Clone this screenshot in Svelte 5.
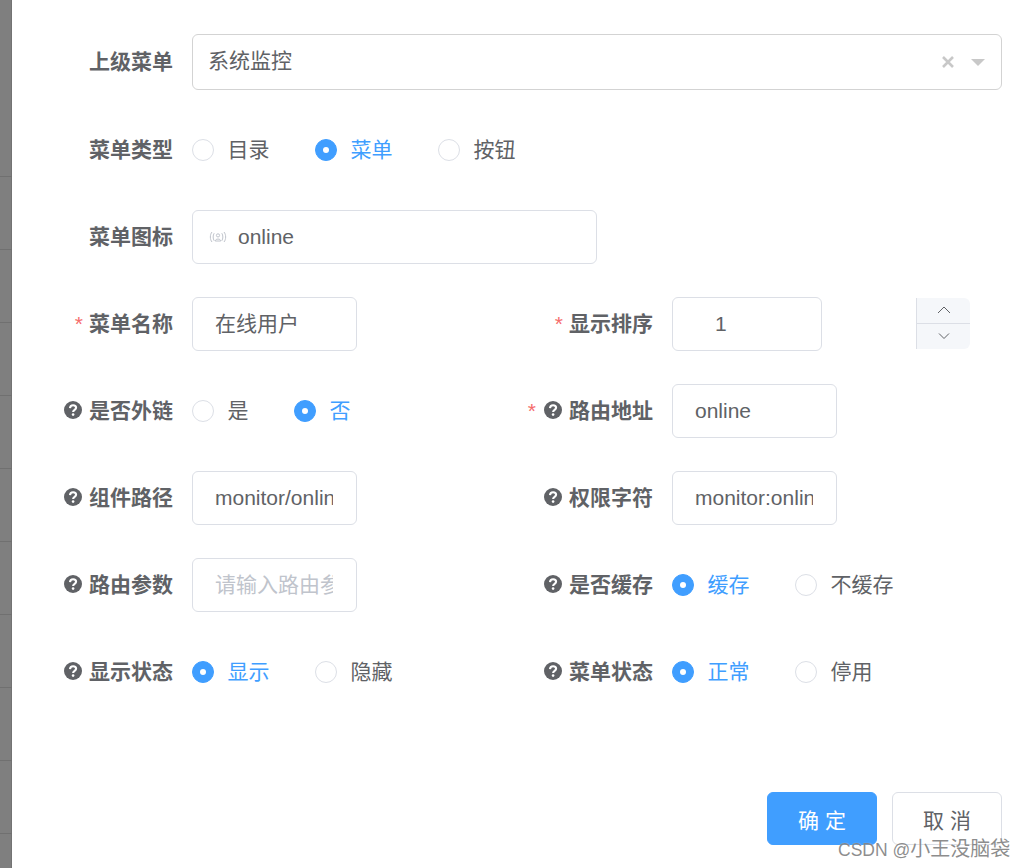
<script>
  const strip = Array(10).fill(0);

  let menuType = $state("菜单");
  let isFrame = $state("否");
  let isCache = $state("缓存");
  let visible = $state("显示");
  let menuStatus = $state("正常");
</script>

{#snippet fieldLabel(text, required, tip)}
  <div class="label">
    {#if required}<span class="star">*</span>{/if}
    {#if tip}
      <svg class="tip" viewBox="0 0 18 18" width="18" height="18">
        <circle cx="9" cy="9" r="9" fill="#606266" />
        <path d="M6 7.1C6.1 5.2 7.4 4.2 9.1 4.2C10.9 4.2 12.1 5.3 12.1 6.8C12.1 8.9 9.1 8.9 9.1 11.1" fill="none" stroke="#fff" stroke-width="2.1" />
        <circle cx="9.1" cy="13.6" r="1.3" fill="#fff" />
      </svg>
    {/if}
    <span>{text}</span>
  </div>
{/snippet}

{#snippet radios(options, current, pick)}
  <div class="radio-group">
    {#each options as opt}
      <button type="button" class="radio" class:checked={current === opt} onclick={() => pick(opt)}>
        <span class="dot"></span>
        <span>{opt}</span>
      </button>
    {/each}
  </div>
{/snippet}

<div class="page">
  <div class="backdrop">
    {#each strip as _}
      <div class="backdrop-row"></div>
    {/each}
  </div>

  <div class="dialog">
    <form class="form">
      <div class="item full select-row">
        {@render fieldLabel("上级菜单")}
        <div class="select">
          <span class="select-value">系统监控</span>
          <svg class="clear" viewBox="0 0 14 14" width="14" height="14">
            <path d="M2 2L12 12M12 2L2 12" stroke="#c8c8c8" stroke-width="2.6" fill="none" />
          </svg>
          <span class="caret"></span>
        </div>
      </div>

      <div class="item full">
        {@render fieldLabel("菜单类型")}
        {@render radios(["目录", "菜单", "按钮"], menuType, (v) => (menuType = v))}
      </div>

      <div class="item full">
        {@render fieldLabel("菜单图标")}
        <div class="icon-input">
          <svg viewBox="0 0 18 12" width="18" height="12" fill="none" stroke="#c0c4cc" stroke-width="1">
            <path d="M3 1C0.8 3.6 0.8 8.4 3 11M5.2 2.2C3.8 4.2 3.8 7.8 5.2 9.8M15 1C17.2 3.6 17.2 8.4 15 11M12.8 2.2C14.2 4.2 14.2 7.8 12.8 9.8" />
            <circle cx="9" cy="4.4" r="1.6" />
            <path d="M6.2 10C6.4 7.4 11.6 7.4 11.8 10Z" />
          </svg>
          <span>online</span>
        </div>
      </div>

      <div class="item">
        {@render fieldLabel("菜单名称", true)}
        <input class="input short cjk" value="在线用户" />
      </div>
      <div class="item">
        {@render fieldLabel("显示排序", true)}
        <input class="input number" value="1" />
        <div class="stepper">
          <div class="step">
            <svg viewBox="0 0 14 8" width="14" height="8"><path d="M1 7L7 1L13 7" fill="none" stroke="#606266" stroke-width="1" /></svg>
          </div>
          <div class="step">
            <svg viewBox="0 0 14 8" width="14" height="8"><path d="M2 1.5L7 6.5L12 1.5" fill="none" stroke="#606266" stroke-width="1" /></svg>
          </div>
        </div>
      </div>

      <div class="item">
        {@render fieldLabel("是否外链", false, true)}
        {@render radios(["是", "否"], isFrame, (v) => (isFrame = v))}
      </div>
      <div class="item">
        {@render fieldLabel("路由地址", true, true)}
        <input class="input short" value="online" />
      </div>

      <div class="item">
        {@render fieldLabel("组件路径", false, true)}
        <input class="input short" value="monitor/online/index" />
      </div>
      <div class="item">
        {@render fieldLabel("权限字符", false, true)}
        <input class="input short" value="monitor:online:list" />
      </div>

      <div class="item">
        {@render fieldLabel("路由参数", false, true)}
        <input class="input short" placeholder="请输入路由参数" />
      </div>
      <div class="item">
        {@render fieldLabel("是否缓存", false, true)}
        {@render radios(["缓存", "不缓存"], isCache, (v) => (isCache = v))}
      </div>

      <div class="item">
        {@render fieldLabel("显示状态", false, true)}
        {@render radios(["显示", "隐藏"], visible, (v) => (visible = v))}
      </div>
      <div class="item">
        {@render fieldLabel("菜单状态", false, true)}
        {@render radios(["正常", "停用"], menuStatus, (v) => (menuStatus = v))}
      </div>
    </form>

    <div class="footer">
      <button type="button" class="btn primary">确 定</button>
      <button type="button" class="btn">取 消</button>
    </div>
  </div>

  <div class="watermark"><span class="mark-latin">CSDN @</span>小王没脑袋</div>
</div>

<style>
  :global(body) {
    background: #fff;
  }

  .page {
    position: relative;
    display: flex;
    width: 1024px;
    height: 868px;
    overflow: hidden;
    font-family: "Liberation Sans", "Noto Sans CJK SC", sans-serif;
    font-size: 21px;
    color: #606266;
  }

  /* 遮罩下露出的表格 */
  .backdrop {
    flex: none;
    width: 12px;
    background: #7f7f7f;
    box-shadow: inset -1px 0 #737373;
    padding-top: 104px;
    box-sizing: border-box;
  }

  .backdrop-row {
    height: 73px;
    box-sizing: border-box;
    border-bottom: 1px solid #707070;
  }

  .dialog {
    flex: 1;
    padding: 34px 22px 0 0;
    background: #fff;
  }

  .form {
    display: grid;
    grid-template-columns: 480px 480px;
    row-gap: 33px;
  }

  .item {
    display: flex;
    align-items: center;
    min-height: 54px;
  }

  .full {
    grid-column: 1 / -1;
  }

  .select-row {
    min-height: 56px;
  }

  .label {
    flex: none;
    display: flex;
    align-items: center;
    justify-content: flex-end;
    width: 161px;
    margin-right: 19px;
    font-weight: 700;
    line-height: 30px;
  }

  .star {
    margin-right: 6px;
    color: #f56c6c;
    font-weight: 400;
  }

  .star + .tip {
    margin-left: 2px;
  }

  .tip {
    flex: none;
    margin-right: 7px;
    margin-top: -2px;
  }

  .select {
    flex: none;
    box-sizing: border-box;
    display: flex;
    align-items: center;
    width: 810px;
    height: 56px;
    padding: 0 16px 0 15px;
    border: 1px solid #d3d3d3;
    border-radius: 6px;
  }

  .select-value {
    flex: 1;
    margin-top: -6px;
  }

  .clear {
    margin-right: 16px;
  }

  .caret {
    width: 0;
    height: 0;
    border-left: 7px solid transparent;
    border-right: 7px solid transparent;
    border-top: 7px solid #c8c8c8;
  }

  .icon-input {
    box-sizing: border-box;
    display: flex;
    align-items: center;
    gap: 11px;
    width: 405px;
    height: 54px;
    padding-left: 16px;
    border: 1px solid #dcdfe6;
    border-radius: 6px;
  }

  .input {
    box-sizing: border-box;
    height: 54px;
    padding: 0 23px 0 22px;
    border: 1px solid #dcdfe6;
    border-radius: 6px;
    outline: none;
    font: inherit;
    color: #606266;
    background: #fff;
  }

  .input::placeholder {
    color: #c0c4cc;
  }

  .cjk {
    padding-bottom: 4px;
  }

  .short {
    width: 165px;
  }

  .number {
    width: 150px;
    padding: 0 22px 0 42px;
  }

  .stepper {
    flex: none;
    display: flex;
    flex-direction: column;
    width: 54px;
    height: 51px;
    margin: -2px 0 0 94px;
    background: #f5f7fa;
    border-left: 1px solid #dcdfe6;
    border-radius: 0 6px 6px 0;
    box-sizing: border-box;
  }

  .step {
    flex: 1;
    display: flex;
    align-items: center;
    justify-content: center;
  }

  .step + .step {
    border-top: 1px solid #dcdfe6;
  }

  .radio-group {
    display: flex;
    gap: 45px;
  }

  .radio {
    display: flex;
    align-items: center;
    gap: 13.5px;
    padding: 0;
    border: none;
    background: none;
    font: inherit;
    color: inherit;
    line-height: 30px;
  }

  .radio-group .radio + .radio {
    margin-left: 0.5px;
  }

  .dot {
    box-sizing: border-box;
    flex: none;
    display: flex;
    align-items: center;
    justify-content: center;
    width: 22px;
    height: 22px;
    border: 1px solid #dcdfe6;
    border-radius: 50%;
    background: #fff;
  }

  .radio.checked {
    color: #409eff;
  }

  .radio.checked .dot {
    background: #409eff;
    border-color: #409eff;
  }

  .radio.checked .dot::after {
    content: "";
    width: 6px;
    height: 6px;
    border-radius: 50%;
    background: #fff;
  }

  .footer {
    display: flex;
    justify-content: flex-end;
    gap: 15px;
    margin-top: 93px;
  }

  .btn {
    box-sizing: border-box;
    width: 110px;
    height: 53px;
    border: 1px solid #dcdfe6;
    border-radius: 6px;
    background: #fff;
    font: inherit;
    color: #606266;
  }

  .primary {
    border-color: #409eff;
    background: #409eff;
    color: #fff;
  }

  .watermark {
    position: absolute;
    left: 838px;
    top: 837px;
    font-size: 20px;
    line-height: 24px;
    color: rgba(120, 120, 120, 0.85);
    text-shadow: 0 0 1px rgba(255, 255, 255, 0.6);
    white-space: nowrap;
  }

  .mark-latin {
    font-size: 17.5px;
  }
</style>
